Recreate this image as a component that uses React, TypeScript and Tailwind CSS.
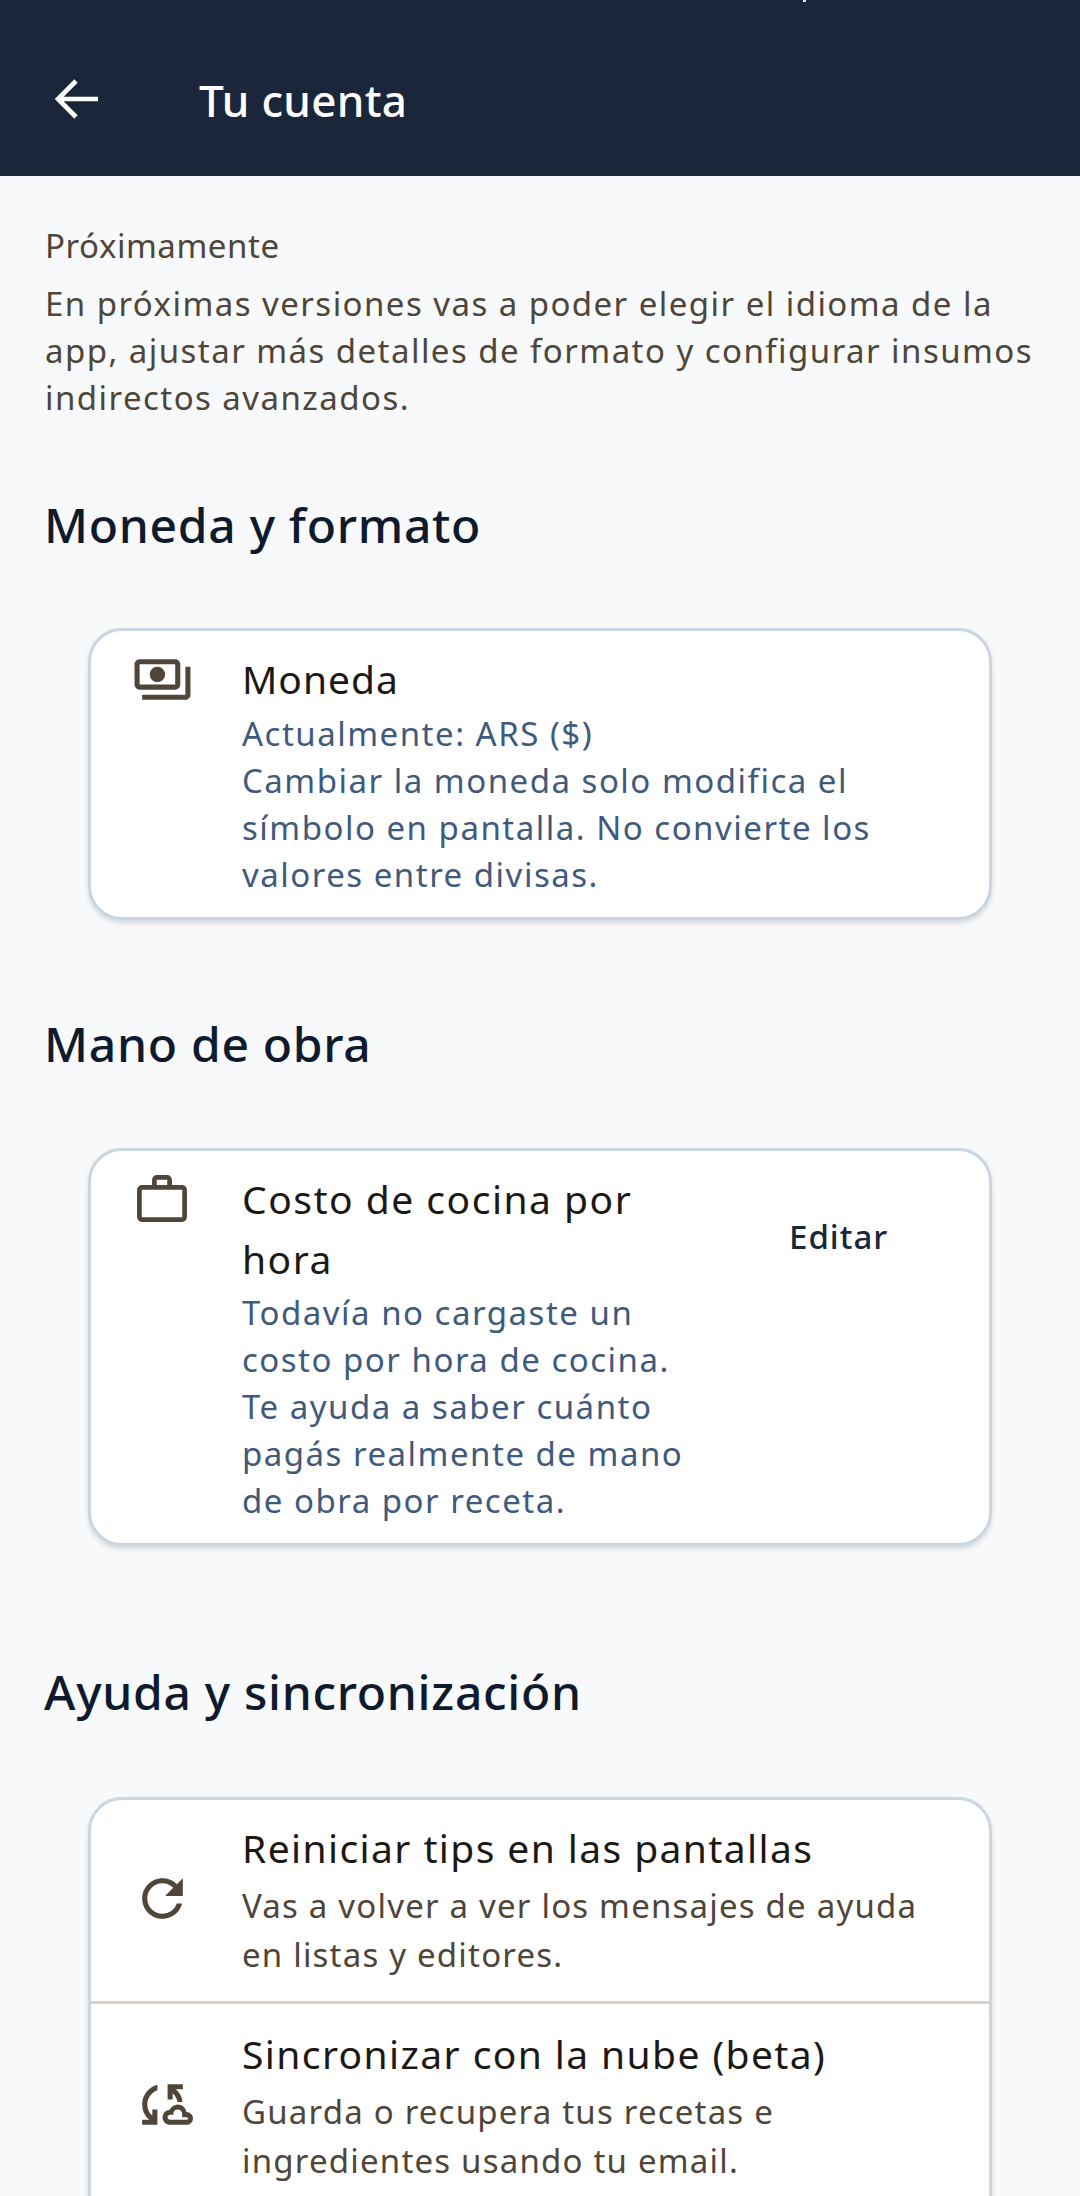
import React from 'react';
import { MdOutlinePayments, MdRefresh, MdOutlineCloudSync } from 'react-icons/md';

const font = { fontFamily: '"Noto Sans", sans-serif' };
const cardClass = 'mx-[88px] rounded-[34px] border-[3px] border-[#cbd5df] bg-white shadow-[0_3px_5px_rgba(15,27,45,0.15)]';

function Heading({ children, className }: { children: React.ReactNode; className: string }) {
  return <h2 className={`text-[48px] leading-[62px] tracking-[0.7px] font-medium text-[#0f1b2d] ${className}`}>{children}</h2>;
}

function BriefcaseIcon() {
  return (
    <svg width="50" height="47" viewBox="0 0 50 47" fill="none" stroke="#4f4539" strokeWidth="4.7">
      <rect x="2.4" y="12.4" width="45.2" height="32.2" rx="2.5" />
      <path d="M17.4 11V4.9a2.5 2.5 0 0 1 2.5-2.5h10.2a2.5 2.5 0 0 1 2.5 2.5V11" />
    </svg>
  );
}

export default function App() {
  return (
    <div style={font} className="relative w-[1080px] h-[2196px] overflow-hidden bg-[#f8f9fb]">
      <span className="absolute left-[803px] top-0 w-[3px] h-[2px] bg-[#dfe5ee]" />
      <header className="h-[176px] bg-[#1b263b] flex items-center pt-[24px]">
        <div className="w-[199px] pl-[53px] -mt-[2px]">
          <svg width="48" height="48" viewBox="0 0 48 48" fill="none" stroke="white" strokeWidth="4.6" className="block">
            <path d="M45 24H6M23 6 5 24l18 18" />
          </svg>
        </div>
        <h1 className="text-[44px] tracking-[0.3px] text-white font-medium">Tu cuenta</h1>
      </header>

      <section className="px-[45px] pt-[46px] text-[#4f4539]">
        <p className="text-[33px] leading-[47px] tracking-[0.55px]">Próximamente</p>
        <p className="text-[33px] leading-[47px] tracking-[1.45px] mt-[11px]">
          En próximas versiones vas a poder elegir el idioma de la app, ajustar más detalles de formato y configurar insumos indirectos avanzados.
        </p>
      </section>

      <Heading className="ml-[44px] mt-[73px]">Moneda y formato</Heading>

      <div className={`${cardClass} mt-[72px] h-[292px] flex`}>
        <div className="w-[151px] pl-[41px] pt-[18px]">
          <MdOutlinePayments size={61} color="#4f4539" />
        </div>
        <div className="flex-1">
          <p className="text-[39px] leading-[56px] mt-[20px] tracking-[1px] text-[#1c1914]">Moneda</p>
          <p className="text-[33px] leading-[47px] tracking-[1.5px] text-[#3f5a7d] mt-[3px]">
            Actualmente: ARS ($)<br />
            Cambiar la moneda solo modifica el<br />
            símbolo en pantalla. No convierte los<br />
            valores entre divisas.
          </p>
        </div>
      </div>

      <Heading className="ml-[44px] mt-[93px]">Mano de obra</Heading>

      <div className={`${cardClass} mt-[73px] h-[398px] flex`}>
        <div className="w-[151px] pl-[46px] pt-[24px]">
          <BriefcaseIcon />
        </div>
        <div className="w-[470px]">
          <p className="text-[39px] leading-[60px] mt-[18px] tracking-[1.5px] text-[#1c1914]">Costo de cocina por hora</p>
          <p className="text-[33px] leading-[47px] tracking-[1.5px] text-[#3f5a7d]">
            Todavía no cargaste un<br />
            costo por hora de cocina.<br />
            Te ayuda a saber cuánto<br />
            pagás realmente de mano<br />
            de obra por receta.
          </p>
        </div>
        <p className="ml-[77px] mt-[62px] text-[33px] leading-[47px] tracking-[1px] font-medium text-[#1b263b]">Editar</p>
      </div>

      <Heading className="ml-[44px] mt-[115px]">Ayuda y sincronización</Heading>

      <div className={`${cardClass} mt-[74px]`}>
        <div className="h-[204px] flex border-b-[3px] border-[#d9cfc3]">
          <div className="w-[151px] flex items-center pl-[41px] pb-[4px]">
            <MdRefresh size={61} color="#4f4539" />
          </div>
          <div>
            <p className="text-[39px] leading-[56px] mt-[20px] tracking-[1.4px] text-[#1c1914]">Reiniciar tips en las pantallas</p>
            <p className="text-[33px] leading-[49px] tracking-[1.2px] text-[#4f4539] mt-[5px]">
              Vas a volver a ver los mensajes de ayuda<br />en listas y editores.
            </p>
          </div>
        </div>
        <div className="h-[230px] flex">
          <div className="w-[151px] pl-[41px] pt-[70px]">
            <MdOutlineCloudSync size={61} color="#4f4539" />
          </div>
          <div>
            <p className="text-[39px] leading-[56px] mt-[22px] tracking-[1.4px] text-[#1c1914]">Sincronizar con la nube (beta)</p>
            <p className="text-[33px] leading-[49px] tracking-[1.2px] text-[#4f4539] mt-[5px]">
              Guarda o recupera tus recetas e<br />ingredientes usando tu email.
            </p>
          </div>
        </div>
      </div>
    </div>
  );
}
